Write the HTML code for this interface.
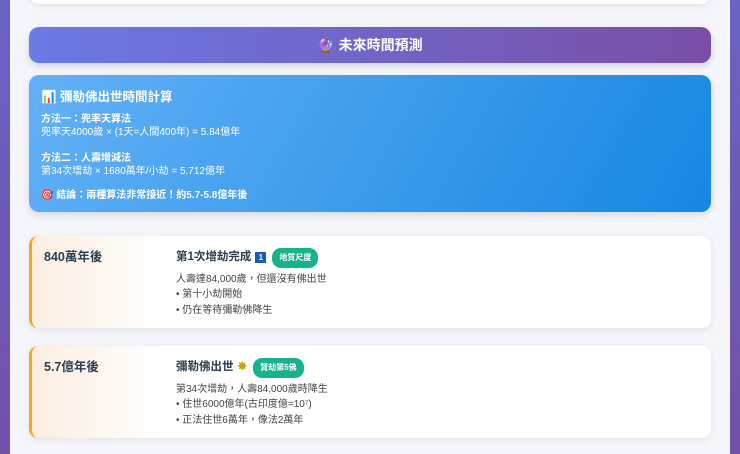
<!DOCTYPE html>
<html><head><meta charset="utf-8"><style>
*{margin:0;padding:0;box-sizing:border-box}
html,body{width:740px;height:454px;overflow:hidden}
body{background:linear-gradient(180deg,#6a63c4,#7150a8);font-family:"Liberation Sans","Noto Sans CJK TC",sans-serif;position:relative}
.wrap{position:absolute;left:10px;top:0;width:720px;height:454px;background:#f4f6fb}
.top{position:absolute;left:29px;top:-20px;width:682px;height:24px;background:#fff;border-radius:10px;box-shadow:0 2px 6px rgba(0,0,0,.08)}
.hdr{position:absolute;left:29px;top:27px;width:682px;height:36px;border-radius:10px;background:linear-gradient(90deg,#6a7ae6,#7a4ea6);color:#fff;font-weight:bold;font-size:14px;text-align:center;line-height:36px;box-shadow:0 3px 8px rgba(0,0,0,.15)}
.blue{position:absolute;left:29px;top:75px;width:682px;height:137px;border-radius:10px;background:linear-gradient(120deg,#63b1f6,#1787e2);color:#fff;padding:11px 12px;box-shadow:0 3px 8px rgba(0,0,0,.12)}
.blue h3{font-size:12.5px;margin-bottom:8px}
.blue p{font-size:10px;line-height:13px}
.card{position:absolute;left:29px;width:682px;height:92px;border-radius:9px;background:#fff;border-left:3px solid #f5a623;box-shadow:0 2px 8px rgba(0,0,0,.08);overflow:hidden}
.card .l{position:absolute;left:0;top:0;width:130px;height:100%;background:linear-gradient(90deg,#fbeee0,#fff);padding:10px 12px;font-weight:bold;font-size:12.5px;color:#2c3e50}
.card .r{position:absolute;left:144px;top:12px;color:#444;font-size:10px;line-height:15.5px}
.card .t{font-weight:bold;font-size:11.5px;color:#2c3e50;margin-bottom:4px;display:flex;align-items:center;gap:4px}
.b{background:#16b38c;color:#fff;font-size:8px;border-radius:9px;padding:2px 7px;margin-left:2px}
.n1{display:inline-block;width:11px;height:11px;background:#1d5ab8;color:#fff;font-size:8px;text-align:center;line-height:11px}
</style></head><body>
<div class="wrap"></div>
<div class="top"></div>
<div class="hdr">🔮 未來時間預測</div>
<div class="blue">
<h3>📊 彌勒佛出世時間計算</h3>
<p><b>方法一：兜率天算法</b><br>兜率天4000歲 × (1天=人間400年) = 5.84億年</p>
<p style="margin-top:13px"><b>方法二：人壽增減法</b><br>第34次增劫 × 1680萬年/小劫 = 5.712億年</p>
<p style="margin-top:11px;font-weight:bold">🎯 結論：兩種算法非常接近！約5.7-5.8億年後</p>
</div>
<div class="card" style="top:236px"><div class="l">840萬年後</div><div class="r">
<div class="t">第1次增劫完成 <span class="n1">1</span><span class="b">地質尺度</span></div>
人壽達84,000歲，但還沒有佛出世<br>• 第十小劫開始<br>• 仍在等待彌勒佛降生</div></div>
<div class="card" style="top:346px"><div class="l">5.7億年後</div><div class="r">
<div class="t">彌勒佛出世 <span style="color:#c9a400">✸</span><span class="b">賢劫第5佛</span></div>
第34次增劫，人壽84,000歲時降生<br>• 住世6000億年(古印度億=10⁷)<br>• 正法住世6萬年，像法2萬年</div></div>
</body></html>
